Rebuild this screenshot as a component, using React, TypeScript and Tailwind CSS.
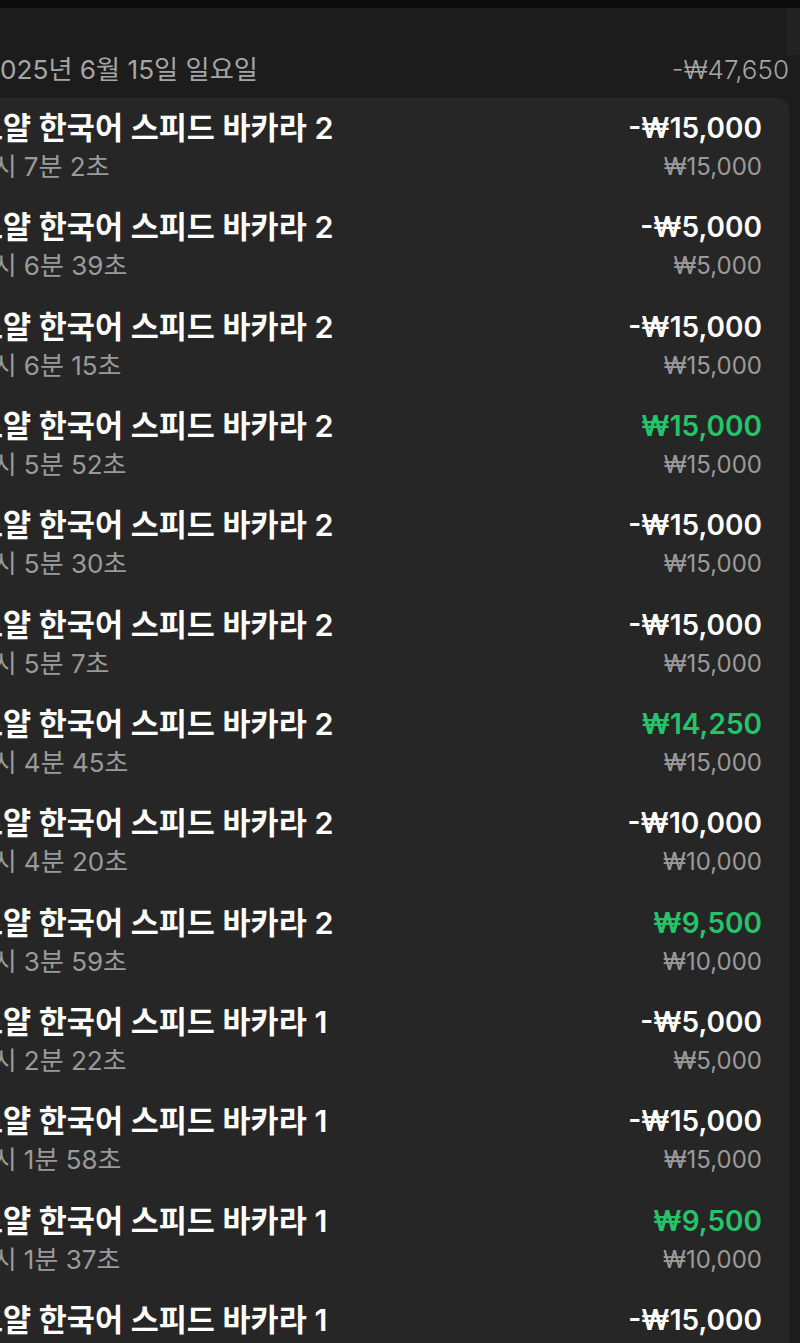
import React from "react";

type Row = { game: string; time: string; amount: string; bet: string; win?: boolean };

const rows: Row[] = [
  { game: "로얄 한국어 스피드 바카라 2", time: "13시 7분 2초", amount: "-₩15,000", bet: "₩15,000" },
  { game: "로얄 한국어 스피드 바카라 2", time: "13시 6분 39초", amount: "-₩5,000", bet: "₩5,000" },
  { game: "로얄 한국어 스피드 바카라 2", time: "13시 6분 15초", amount: "-₩15,000", bet: "₩15,000" },
  { game: "로얄 한국어 스피드 바카라 2", time: "13시 5분 52초", amount: "₩15,000", bet: "₩15,000", win: true },
  { game: "로얄 한국어 스피드 바카라 2", time: "13시 5분 30초", amount: "-₩15,000", bet: "₩15,000" },
  { game: "로얄 한국어 스피드 바카라 2", time: "13시 5분 7초", amount: "-₩15,000", bet: "₩15,000" },
  { game: "로얄 한국어 스피드 바카라 2", time: "13시 4분 45초", amount: "₩14,250", bet: "₩15,000", win: true },
  { game: "로얄 한국어 스피드 바카라 2", time: "13시 4분 20초", amount: "-₩10,000", bet: "₩10,000" },
  { game: "로얄 한국어 스피드 바카라 2", time: "13시 3분 59초", amount: "₩9,500", bet: "₩10,000", win: true },
  { game: "로얄 한국어 스피드 바카라 1", time: "13시 2분 22초", amount: "-₩5,000", bet: "₩5,000" },
  { game: "로얄 한국어 스피드 바카라 1", time: "13시 1분 58초", amount: "-₩15,000", bet: "₩15,000" },
  { game: "로얄 한국어 스피드 바카라 1", time: "13시 1분 37초", amount: "₩9,500", bet: "₩10,000", win: true },
  { game: "로얄 한국어 스피드 바카라 1", time: "13시 1분 15초", amount: "-₩15,000", bet: "₩15,000" },
];

const kr = "font-['Inter','Noto_Sans_CJK_KR',sans-serif]";
const num = "font-['Inter','Noto_Sans_CJK_KR',sans-serif]";

export default function App() {
  return (
    <div className="relative w-[800px] h-[1343px] overflow-hidden bg-[#1c1c1c]">
      <div className="h-2 bg-[#0b0b0b]" />
      <div className="absolute right-0 top-2 w-[13px] h-[47px] bg-[#232323]" />
      <div className="ml-[-40px] mr-[11px]">
        <div className="flex items-center justify-between pl-[24px] pt-[46px] pb-[12px] h-[90px]">
          <span className={`${kr} text-[26.2px] leading-[32px] text-[#a6a6a6] whitespace-nowrap`}>
            2025년 6월 15일 일요일
          </span>
          <span className={`${num} text-[26px] leading-[32px] font-light text-[#a6a6a6] whitespace-nowrap`}>
            -₩47,650
          </span>
        </div>
        <div className="rounded-tr-[12px] bg-[#262626] pl-[15px] pr-[27px]">
          {rows.map((r, i) => (
            <div key={i} className="flex justify-between pt-[12px] pb-[13.33px]">
              <div className="flex flex-col gap-[4px]">
                <span className={`${kr} text-[30.5px] leading-[36px] font-semibold text-white whitespace-nowrap`}>
                  {r.game}
                </span>
                <span className={`${kr} text-[26px] leading-[34px] text-[#9a9a9a] whitespace-nowrap ml-[-9px]`}>
                  {r.time}
                </span>
              </div>
              <div className="flex flex-col items-end gap-[4px]">
                <span
                  className={`${num} text-[28px] leading-[36px] font-semibold whitespace-nowrap ${
                    r.win ? "text-[#25c46a]" : "text-white"
                  }`}
                >
                  {r.amount}
                </span>
                <span className={`${num} text-[24px] leading-[34px] text-[#9a9a9a] whitespace-nowrap`}>
                  {r.bet}
                </span>
              </div>
            </div>
          ))}
        </div>
      </div>
    </div>
  );
}
